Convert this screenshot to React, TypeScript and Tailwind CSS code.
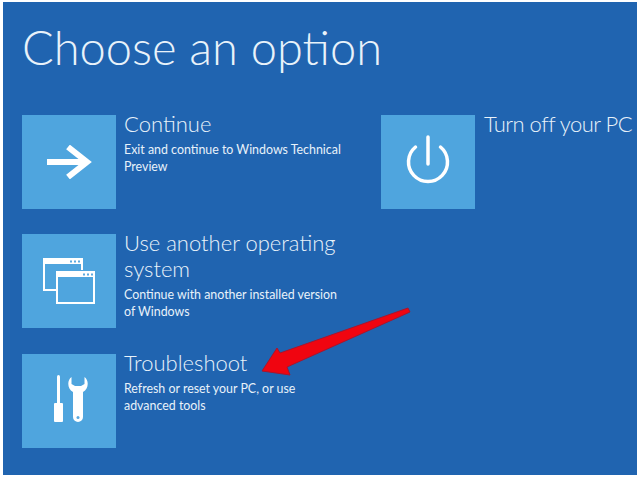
const Arrow = () => (
  <svg width="45" height="34" viewBox="0 0 45 34" fill="none" stroke="white" strokeWidth="6">
    <path d="M0 17H40" />
    <path d="M21 2L40 17L21 32" />
  </svg>
);

const Windows = () => (
  <svg width="52" height="46" viewBox="0 0 52 46" fill="none" stroke="white" strokeWidth="2">
    <path d="M13 32H1V1H39V12" />
    <path d="M1 3.500H39" strokeWidth="5" />
    <rect x="14" y="14" width="37" height="31" />
    <path d="M14 16.500H51" strokeWidth="5" />
    <path d="M27 3.500H29M31 3.500H33M35 3.500H37M40 16.500H42M44 16.500H46M48 16.500H50" stroke="#5aa9e0" strokeWidth="2" />
  </svg>
);

const Tools = () => (
  <svg width="38" height="52" viewBox="-4 0 38 52" fill="white">
    <rect x="3" y="0" width="3" height="29" rx="1.500" />
    <rect x="0" y="28" width="9" height="19" rx="1" />
    <path d="M17.500 2C13 5 13 14 19 17V42A5 5 0 0 0 29 42V17C35 14 35 5 30.500 2V9L27 11H21L17.500 9Z" />
    <circle cx="24" cy="42.500" r="1.500" fill="#5aa9e0" />
  </svg>
);

const Power = () => (
  <svg width="44" height="54" viewBox="0 0 44 54" fill="none" stroke="white" strokeWidth="3.500" strokeLinecap="round">
    <path d="M22 2V29" />
    <path d="M9.500 12A19.500 19.500 0 1 0 34.500 12" />
  </svg>
);

function Option({ icon, title, sub, titleClass = "" }: { icon: React.ReactNode; title: string; sub?: string; titleClass?: string }) {
  return (
    <div className="flex gap-2">
      <div className="flex h-[94px] w-[94px] shrink-0 items-center justify-center bg-[#4fa5de]">{icon}</div>
      <div className="text-[#e8f2fa]">
        <div className={`-mt-[4px] text-[22px] leading-[26px] font-light whitespace-nowrap ${titleClass}`}>
          {title.split("\n").map((t) => (
            <div key={t}>{t}</div>
          ))}
        </div>
        {sub && <div className="mt-[4px] w-[218px] text-[12.4px] leading-[17px] font-normal">{sub}</div>}
      </div>
    </div>
  );
}

export default function App() {
  return (
    <div className="h-[477px] w-[639px] overflow-hidden bg-white pt-[2px] pl-[3px] font-['Lato',sans-serif]">
      <div className="h-[473px] w-[634px] bg-[#2064b0] pt-[13px] pl-[19px]">
        <h1 className="text-[47px] leading-[64px] font-light whitespace-nowrap text-[#e8f2fa]">Choose an option</h1>
        <div className="mt-[36px] flex">
          <div className="flex w-[359px] shrink-0 flex-col">
            <Option icon={<Arrow />} title="Continue" sub="Exit and continue to Windows Technical Preview" />
            <div className="mt-[25px]">
              <Option icon={<Windows />} title={"Use another operating\nsystem"} sub="Continue with another installed version of Windows" />
            </div>
            <div className="mt-[26px]">
              <Option icon={<Tools />} title="Troubleshoot" sub="Refresh or reset your PC, or use advanced tools" />
            </div>
          </div>
          <div>
            <Option icon={<Power />} title="Turn off your PC" titleClass="ml-[1px] tracking-[-0.5px]" />
          </div>
        </div>
      </div>
      <svg className="absolute top-[306px] left-[260px]" width="152" height="74" viewBox="0 0 152 74">
        <path d="M148 2L150 6L27 61L30 69L2 65L17 42L20 47Z" fill="#f00510" stroke="#a8152e" strokeWidth="1" strokeLinejoin="round" />
      </svg>
    </div>
  );
}
